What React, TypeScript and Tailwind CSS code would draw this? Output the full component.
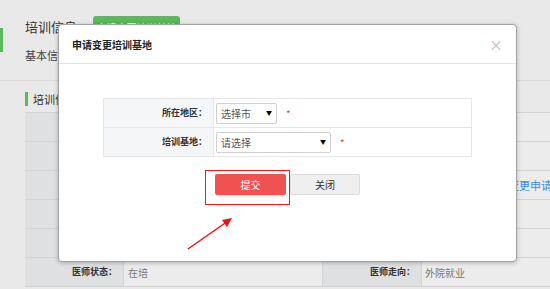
const bgRows: { l1: string; v1: string; l2: string; v2: string; link?: boolean }[] = [
  { l1: "姓　　名：", v1: "", l2: "性　　别：", v2: "" },
  { l1: "培训专业：", v1: "", l2: "培训年限：", v2: "" },
  { l1: "培训基地：", v1: "", l2: "变更记录：", v2: "变更申请", link: true },
  { l1: "入培时间：", v1: "", l2: "结业时间：", v2: "" },
  { l1: "培训类型：", v1: "", l2: "人员类型：", v2: "" },
  { l1: "医师状态：", v1: "在培", l2: "医师走向：", v2: "外院就业" },
];

function Select({ text, width }: { text: string; width: string }) {
  return (
    <div
      className={`flex h-[21px] ${width} items-center justify-between rounded-[2px] border border-[#cfcfcf] bg-white pl-[4px] pr-[4px] text-[10px] text-[#555]`}
    >
      <span>{text}</span>
      <span className="text-[6px] leading-none text-black">▼</span>
    </div>
  );
}

export default function App() {
  return (
    <div className="relative h-[289px] w-[550px] overflow-hidden bg-[#e9e9e9] font-['Noto_Sans_CJK_SC','Microsoft_YaHei',sans-serif] text-[#333]">
      {/* page behind the dialog */}
      <div className="flex border-b border-[#d6d6d6] pb-[16px]">
        <div className="w-[25px] pt-[28px]">
          <div className="h-[24px] w-[3px] bg-[#5cb85c]" />
        </div>
        <div className="flex flex-col pt-[16px]">
          <div className="flex h-[28px] items-start gap-[16px]">
            <span className="pt-[2px] text-[13px] leading-[18px]">培训信息</span>
            <span className="flex h-[28px] w-[87px] items-start justify-center rounded-[3px] bg-[#5cb85c] pt-[4px] text-[10px] text-white">
              申请变更培训基地
            </span>
          </div>
          <span className="mt-[2px] text-[11px] leading-[18px] text-[#444]">基本信息</span>
        </div>
      </div>

      <div className="pl-[25px]">
        <div className="mt-[11px] flex h-[14px] items-center gap-[5px]">
          <div className="h-[14px] w-[3px] bg-[#5cb85c]" />
          <span className="text-[11px]">培训信息</span>
        </div>
        <div className="mt-[6px] grid grid-cols-[99px_199px_99px_1fr] border-t border-[#d3d3d3]">
          {bgRows.map((r) => (
            <div key={r.l1} className="contents">
              <div className="flex h-[29px] items-center justify-end border-b border-r border-[#d3d3d3] bg-[#dfe0e2] pr-[6px] text-[9px] font-bold">
                {r.l1}
              </div>
              <div className="flex h-[29px] items-center border-b border-r border-[#d3d3d3] bg-[#ececec] pl-[4px] text-[10px] text-[#777]">
                {r.v1}
              </div>
              <div className="flex h-[29px] items-center justify-end border-b border-r border-[#d3d3d3] bg-[#dfe0e2] pr-[6px] text-[9px] font-bold">
                {r.l2}
              </div>
              <div
                className={`flex h-[29px] items-center whitespace-nowrap border-b border-[#d3d3d3] bg-[#ececec] ${
                  r.link ? "pl-[86px] text-[11px] text-[#3a8ee6]" : "pl-[3px] text-[10px] text-[#777]"
                }`}
              >
                {r.v2}
              </div>
            </div>
          ))}
        </div>
      </div>

      {/* dialog */}
      <div className="absolute left-[58px] top-[24px] flex h-[238px] w-[459px] flex-col rounded-[4px] border border-[#a3a3a3] bg-white shadow-[0_1px_4px_rgba(0,0,0,0.25)]">
        <div className="flex h-[39px] items-center justify-between border-b border-[#e5e5e5] pl-[13px] pr-[13px]">
          <span className="text-[10px] font-bold text-[#222]">申请变更培训基地</span>
          <span className="text-[14px] leading-none text-[#bbb]">×</span>
        </div>

        <div className="ml-[44px] mt-[34px] w-[369px] border border-[#e6e6e6]">
          <div className="flex h-[29px] border-b border-[#e6e6e6]">
            <div className="flex w-[110px] items-center justify-end border-r border-[#e6e6e6] bg-[#f5f6f8] pr-[6px] text-[9px] font-bold">
              所在地区：
            </div>
            <div className="flex items-center pl-[2px]">
              <Select text="选择市" width="w-[61px]" />
              <span className="ml-[9px] text-[10px] text-[#f33]">*</span>
            </div>
          </div>
          <div className="flex h-[28px]">
            <div className="flex w-[110px] items-center justify-end border-r border-[#e6e6e6] bg-[#f5f6f8] pr-[6px] text-[9px] font-bold">
              培训基地：
            </div>
            <div className="flex items-center pl-[2px]">
              <Select text="请选择" width="w-[115px]" />
              <span className="ml-[9px] text-[10px] text-[#f33]">*</span>
            </div>
          </div>
        </div>

        <div className="ml-[156px] mt-[17px] flex items-start gap-[4px]">
          <button className="flex h-[21px] w-[71px] items-center justify-center rounded-[2px] bg-[#f05151] text-[10px] text-white">
            提交
          </button>
          <button className="flex h-[21px] w-[70px] items-center justify-center rounded-[2px] border border-[#dcdcdc] bg-[#efefef] text-[10px] text-[#333]">
            关闭
          </button>
        </div>
      </div>

      {/* annotation: highlight box and arrow */}
      <svg className="absolute left-0 top-0" width="550" height="289" viewBox="0 0 550 289">
        <rect x="205.5" y="170.5" width="84" height="34" fill="none" stroke="#e41e1e" strokeWidth="1" />
        <line x1="188" y1="249" x2="228" y2="221" stroke="#f01010" strokeWidth="1.5" />
        <polygon points="232,218 222,220 227,227" fill="#f01010" />
      </svg>
    </div>
  );
}
